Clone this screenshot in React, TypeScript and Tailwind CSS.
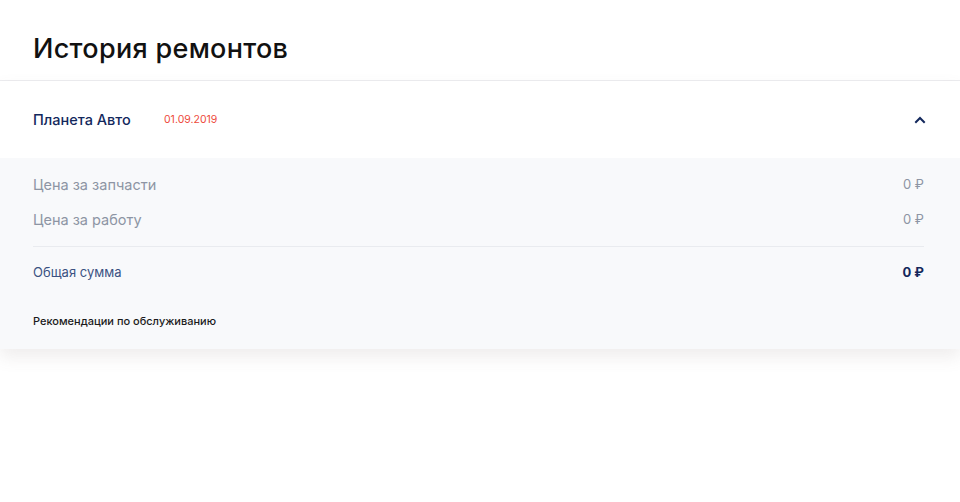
import React from 'react';

const rows = [
  { label: 'Цена за запчасти', value: '0 ₽' },
  { label: 'Цена за работу', value: '0 ₽' },
];

export default function App() {
  return (
    <div className="w-[960px] h-[502px] bg-white font-['Inter','Noto_Sans',sans-serif] overflow-hidden">
      <div className="h-[81px] px-[33px] pt-[17px] border-b border-[#ececef]">
        <h1 className="text-[27px] leading-[64px] font-medium text-[#111] tracking-[0.3px]">История ремонтов</h1>
      </div>

      <div className="shadow-[0_8px_16px_rgba(120,110,110,0.12)]">
        {/* Header row */}
        <div className="h-[77px] pl-[33px] pr-[34px] flex items-center">
          <span className="text-[14.5px] font-medium text-[#13285c] w-[131px]">Планета Авто</span>
          <span className="text-[10.5px] text-[#ee4a3c]">01.09.2019</span>
          <svg className="ml-auto w-[12px] h-[12px]" viewBox="0 0 12 12" fill="none">
            <path d="M2 8L6 4L10 8" stroke="#13285c" strokeWidth="2" strokeLinecap="square" />
          </svg>
        </div>

        {/* Details */}
        <div className="bg-[#f8f9fb] pl-[33px] pr-[36px] pt-[9px] pb-[6px]">
          {rows.map(r => (
            <div key={r.label} className="h-[35px] flex items-center justify-between text-[#8d95a4]">
              <span className="text-[14.5px]">{r.label}</span>
              <span className="text-[13px]">{r.value}</span>
            </div>
          ))}
          <div className="mt-[9px] border-t border-[#e9ebef]" />
          <div className="h-[52px] flex items-center justify-between">
            <span className="text-[13px] text-[#3b5282]">Общая сумма</span>
            <span className="text-[13px] font-bold text-[#13285c]">0 ₽</span>
          </div>
          <div className="h-[44px] flex items-center text-[11px] font-medium text-[#1b1b1b]">
            Рекомендации по обслуживанию
          </div>
        </div>
      </div>
    </div>
  );
}
